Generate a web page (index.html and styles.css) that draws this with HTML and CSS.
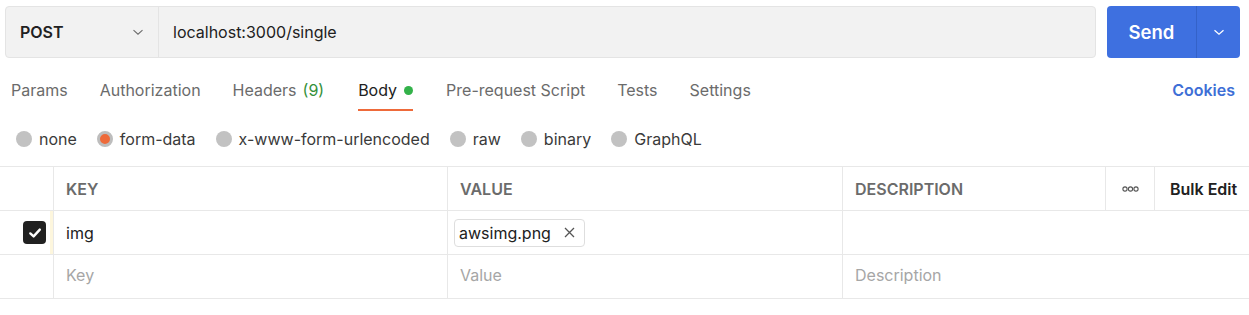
FILE: index.html
```html
<!DOCTYPE html>
<html lang="en">
<head>
    <meta charset="UTF-8">
    <title>Request</title>
    <link rel="stylesheet" href="styles.css">
</head>
<body>
    <div class="url-row">
        <div class="url-bar">
            <div class="method">
                <span>POST</span>
                <svg class="chev" width="12" height="12" viewBox="0 0 12 12"><path d="M1.5 4.2 L6 8.2 L10.5 4.2" fill="none" stroke="#6b6b6b" stroke-width="1.1"/></svg>
            </div>
            <div class="url">localhost:3000/single</div>
        </div>
        <div class="send">
            <span class="send-label">Send</span>
            <span class="send-more">
                <svg width="12" height="12" viewBox="0 0 12 12"><path d="M1.5 4.2 L6 8.2 L10.5 4.2" fill="none" stroke="#fff" stroke-width="1.3"/></svg>
            </span>
        </div>
    </div>

    <div class="tabs">
        <div class="tab">Params</div>
        <div class="tab">Authorization</div>
        <div class="tab">Headers<span class="count">(9)</span></div>
        <div class="tab active">Body <span class="dot"></span></div>
        <div class="tab">Pre-request Script</div>
        <div class="tab">Tests</div>
        <div class="tab">Settings</div>
        <div class="cookies">Cookies</div>
    </div>

    <div class="modes">
        <label class="mode"><span class="radio"></span>none</label>
        <label class="mode"><span class="radio on"></span>form-data</label>
        <label class="mode"><span class="radio"></span>x-www-form-urlencoded</label>
        <label class="mode"><span class="radio"></span>raw</label>
        <label class="mode"><span class="radio"></span>binary</label>
        <label class="mode"><span class="radio"></span>GraphQL</label>
    </div>

    <div class="table">
        <div class="row head">
            <div class="cell c-check"></div>
            <div class="cell c-key">KEY</div>
            <div class="cell c-val">VALUE</div>
            <div class="cell c-desc">DESCRIPTION</div>
            <div class="cell c-more">
                <svg width="17" height="6" viewBox="0 0 17 6"><circle cx="3" cy="3" r="2.1" fill="none" stroke="#555" stroke-width="1.1"/><circle cx="8.5" cy="3" r="2.1" fill="none" stroke="#555" stroke-width="1.1"/><circle cx="14" cy="3" r="2.1" fill="none" stroke="#555" stroke-width="1.1"/></svg>
            </div>
            <div class="cell c-bulk">Bulk Edit</div>
        </div>
        <div class="row">
            <div class="cell c-check marked">
                <span class="checkbox">
                    <svg width="16" height="16" viewBox="0 0 16 16"><path d="M3.3 8.4 L6.6 11.4 L12.8 4.6" fill="none" stroke="#fff" stroke-width="2.4" stroke-linecap="round" stroke-linejoin="round"/></svg>
                </span>
            </div>
            <div class="cell c-key">img</div>
            <div class="cell c-val">
                <span class="file">awsimg.png
                    <svg class="x" width="11" height="11" viewBox="0 0 11 11"><path d="M1 1 L10 10 M10 1 L1 10" stroke="#555" stroke-width="1.3"/></svg>
                </span>
            </div>
            <div class="cell c-rest"></div>
        </div>
        <div class="row">
            <div class="cell c-check"></div>
            <div class="cell c-key ph">Key</div>
            <div class="cell c-val ph">Value</div>
            <div class="cell c-rest ph">Description</div>
        </div>
    </div>
</body>
</html>
```

FILE: styles.css
```css
body {
    margin: 0;
    font-family: Inter, "Noto Sans", sans-serif;
    font-size: 16px;
    color: #212121;
    background: #fff;
}
.url-row {
    display: flex;
    align-items: stretch;
    padding: 6px 9px 0 5px;
    height: 52px;
}
.url-bar {
    flex: 1;
    display: flex;
    background: #f2f2f2;
    border: 1px solid #e4e4e4;
    border-radius: 4px;
}
.method {
    width: 153px;
    display: flex;
    align-items: center;
    justify-content: space-between;
    padding: 0 14px 0 14px;
    box-sizing: border-box;
    border-right: 1px solid #e4e4e4;
    font-weight: 600;
}
.url {
    display: flex;
    align-items: center;
    padding-left: 14px;
}
.send {
    width: 133px;
    margin-left: 11px;
    display: flex;
    background: #3e70e0;
    border-radius: 4px;
    color: #fff;
}
.send-label {
    flex: 1;
    display: flex;
    align-items: center;
    justify-content: center;
    font-weight: 600;
    font-size: 18.5px;
}
.send-more {
    width: 43px;
    display: flex;
    align-items: center;
    justify-content: center;
    border-left: 1px solid #3462c8;
}
.tabs {
    display: flex;
    height: 53px;
    padding: 0 14px 0 11px;
}
.tab {
    color: #6b6b6b;
    margin-right: 32px;
    display: flex;
    align-items: center;
    box-sizing: border-box;
    padding-top: 13px;
    border-bottom: 2px solid transparent;
    white-space: nowrap;
}
.count {
    color: #35913a;
    margin-left: 6px;
    padding-right: 2px;
}
.tab.active {
    color: #212121;
    border-bottom-color: #ee6a3a;
    margin-right: 33px;
}
.dot {
    display: inline-block;
    width: 9px;
    height: 9px;
    border-radius: 50%;
    background: #33b24a;
    margin-left: 7px;
}
.cookies {
    margin-left: auto;
    display: flex;
    align-items: center;
    padding-top: 11px;
    color: #3e6fd6;
    font-weight: 600;
}
.modes {
    display: flex;
    align-items: center;
    height: 55px;
    padding-left: 16px;
}
.mode {
    display: flex;
    align-items: center;
    color: #3a3a3a;
    margin-right: 20px;
}
.radio {
    width: 16px;
    height: 16px;
    border-radius: 50%;
    background: #c2c2c2;
    margin-right: 7px;
    box-sizing: border-box;
}
.radio.on {
    background: #ee6a3a;
    border: 3px solid #bdbdbd;
}
.table {
    border-top: 1px solid #e8e8e8;
}
.row {
    display: flex;
    height: 44px;
    box-sizing: border-box;
    border-bottom: 1px solid #e8e8e8;
}
.cell {
    display: flex;
    align-items: center;
    box-sizing: border-box;
    border-right: 1px solid #e8e8e8;
    padding-left: 12px;
}
.head .cell {
    color: #6b6b6b;
    font-weight: 600;
}
.c-check {
    width: 54px;
    padding: 0;
    justify-content: flex-end;
    padding-right: 7px;
}
.c-check.marked {
    box-shadow: inset -3px 0 0 #fdf6dd;
}
.c-key {
    width: 394px;
}
.c-val {
    width: 395px;
    padding-left: 6px;
}
.head .c-val,
.row .c-val.ph {
    padding-left: 12px;
}
.c-desc {
    width: 263px;
}
.c-more {
    width: 49px;
    justify-content: center;
    padding: 0;
}
.head .c-bulk {
    flex: 1;
    border-right: none;
    padding-left: 15px;
    color: #212121;
}
.c-rest {
    flex: 1;
    border-right: none;
}
.ph {
    color: #a6a6a6;
    padding-bottom: 3px;
}
.checkbox {
    width: 23px;
    height: 23px;
    border-radius: 4px;
    background: #212121;
    display: flex;
    align-items: center;
    justify-content: center;
}
.file {
    display: inline-flex;
    align-items: center;
    height: 26px;
    padding: 0 9px 0 4px;
    border: 1px solid #dedede;
    border-radius: 4px;
}
.x {
    margin-left: 13px;
}
```
